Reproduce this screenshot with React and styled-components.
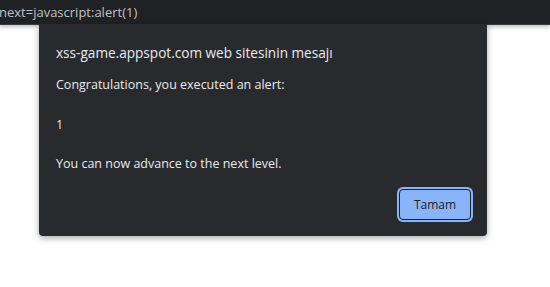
import React from 'react';
import styled, { createGlobalStyle } from 'styled-components';

const GlobalStyle = createGlobalStyle`
  html, body {
    margin: 0;
    padding: 0;
    background: #ffffff;
    font-family: "Open Sans", "Noto Sans", sans-serif;
  }
`;

const Page = styled.div`
  position: relative;
  width: 550px;
  height: 287px;
  overflow: hidden;
  background: #ffffff;
`;

const AddressBar = styled.div`
  height: 24px;
  background: #202124;
  border-bottom: 1px solid #3a3b3e;
  box-shadow: 0 2px 4px rgba(0, 0, 0, 0.25);
  display: flex;
  align-items: center;
  color: #bdc1c6;
  font-size: 13px;
  white-space: nowrap;
  margin-left: -1px;
`;

const Dialog = styled.div`
  position: absolute;
  top: 24px;
  left: 39px;
  width: 448px;
  height: 212px;
  box-sizing: border-box;
  background: #292a2d;
  border-radius: 0 0 4px 4px;
  box-shadow: 0 2px 6px rgba(0, 0, 0, 0.35);
  padding: 19px 16px 0 17px;
  color: #e8eaed;
  display: flex;
  flex-direction: column;
`;

const Title = styled.div`
  font-size: 13.6px;
  line-height: 20px;
  margin-bottom: 13px;
`;

const Line = styled.div`
  font-size: 12.5px;
  line-height: 18px;
  margin-bottom: ${(p) => p.gap || 0}px;
`;

const Footer = styled.div`
  display: flex;
  justify-content: flex-end;
  margin-top: 16px;
`;

const Button = styled.button`
  width: 72px;
  height: 31px;
  box-sizing: border-box;
  background: #8ab4f8;
  border: 1px solid #202124;
  border-radius: 4px;
  box-shadow: 0 0 0 2px #8ab4f8;
  color: #202124;
  font-family: inherit;
  font-size: 12px;
  padding: 0;
  cursor: pointer;
`;

export default function App() {
  return (
    <Page>
      <GlobalStyle />
      <AddressBar>next=javascript:alert(1)</AddressBar>
      <Dialog>
        <Title>xss-game.appspot.com web sitesinin mesajı</Title>
        <Line gap={22}>Congratulations, you executed an alert:</Line>
        <Line gap={21}>1</Line>
        <Line>You can now advance to the next level.</Line>
        <Footer>
          <Button>Tamam</Button>
        </Footer>
      </Dialog>
    </Page>
  );
}
